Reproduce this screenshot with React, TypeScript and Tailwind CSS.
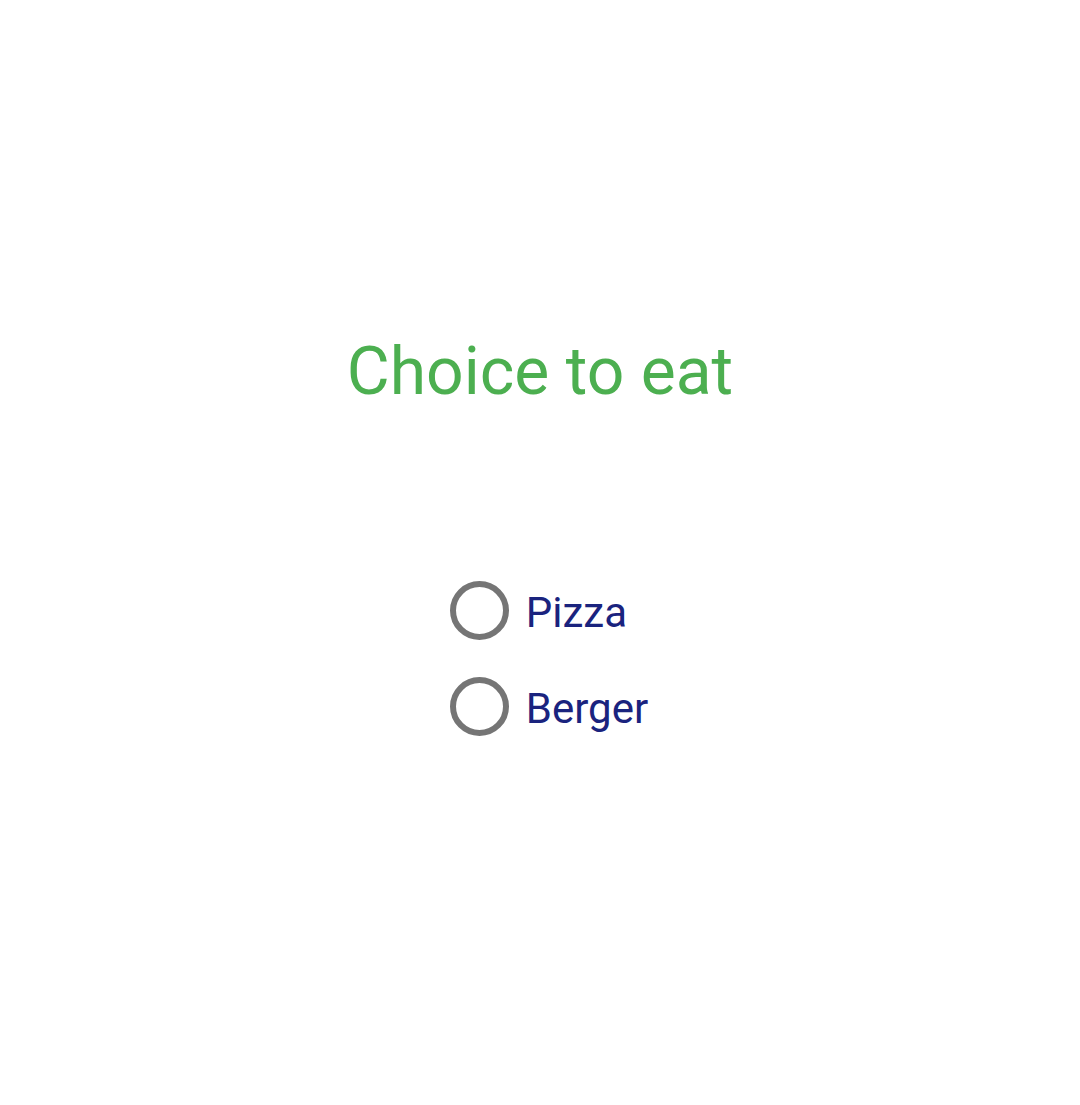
const options = ["Pizza", "Berger"];

export default function App() {
  return (
    <div
      className="w-[1080px] h-[1105px] bg-white flex flex-col items-center"
      style={{ fontFamily: "Roboto, 'Noto Sans', sans-serif" }}
    >
      <h1 className="mt-[339px] text-[66px] leading-none font-normal text-[#4caf50]">
        Choice to eat
      </h1>

      <div className="mt-[157px] ml-[18px] flex flex-col" role="radiogroup">
        {options.map((label) => (
          <label key={label} className="h-[96px] flex items-center gap-[17px] cursor-pointer">
            <span className="w-[59px] h-[59px] rounded-full border-[6px] border-[#757575] shrink-0" />
            <span className="pt-[6px] text-[42px] leading-none text-[#1a237e]">{label}</span>
          </label>
        ))}
      </div>
    </div>
  );
}
